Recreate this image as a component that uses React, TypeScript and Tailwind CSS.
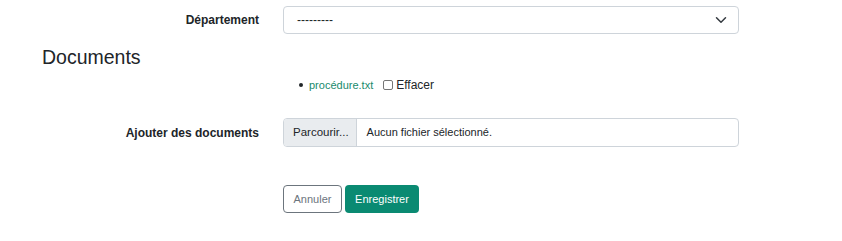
import React from 'react';

export default function App() {
  return (
    <div className="w-[842px] h-[241px] bg-white text-[#212529] font-['Liberation_Sans',Arial,sans-serif] text-[12px] overflow-hidden">
      {/* Département */}
      <div className="flex items-center pt-[6px]">
        <label className="w-[259px] text-right font-bold">Département</label>
        <div className="ml-[24px] w-[456px] h-[28px] border border-[#ced4da] rounded-[4px] flex items-center justify-between pl-[13px] pr-[11px]">
          <span>---------</span>
          <svg width="12" height="12" viewBox="0 0 16 16" fill="none" stroke="#343a40" strokeWidth="2" strokeLinecap="round" strokeLinejoin="round">
            <path d="M2 5l6 6 6-6" />
          </svg>
        </div>
      </div>

      {/* Documents */}
      <h2 className="pl-[42px] mt-[11px] text-[19.5px] leading-[24px] text-[#212529]">Documents</h2>
      <ul className="pl-[299px] mt-[8px]">
        <li className="flex items-center h-[16px]">
          <span className="w-[4px] h-[4px] rounded-full bg-[#212529] mr-[6px]" />
          <a className="text-[#198a6c] text-[11px]">procédure.txt</a>
          <span className="ml-[10px] w-[10px] h-[10px] border border-[#767676] rounded-[2px] bg-white" />
          <span className="ml-[3px]">Effacer</span>
        </li>
      </ul>

      {/* Ajouter des documents */}
      <div className="flex items-center mt-[25px]">
        <label className="w-[259px] text-right font-bold">Ajouter des documents</label>
        <div className="ml-[24px] w-[456px] h-[29px] border border-[#ced4da] rounded-[4px] flex items-center overflow-hidden">
          <span className="h-full flex items-center bg-[#e9ecef] border-r border-[#ced4da] pl-[9px] pr-[7px] text-[11.5px]">Parcourir...</span>
          <span className="pl-[10px] text-[11px]">Aucun fichier sélectionné.</span>
        </div>
      </div>

      {/* Buttons */}
      <div className="flex gap-[3px] pl-[283px] mt-[38px] text-[11px]">
        <button className="h-[28px] w-[59px] border border-[#6c757d] rounded-[4px] text-[#6c757d] bg-white">Annuler</button>
        <button className="h-[28px] w-[74px] rounded-[4px] text-white bg-[#0a8a72]">Enregistrer</button>
      </div>
    </div>
  );
}
